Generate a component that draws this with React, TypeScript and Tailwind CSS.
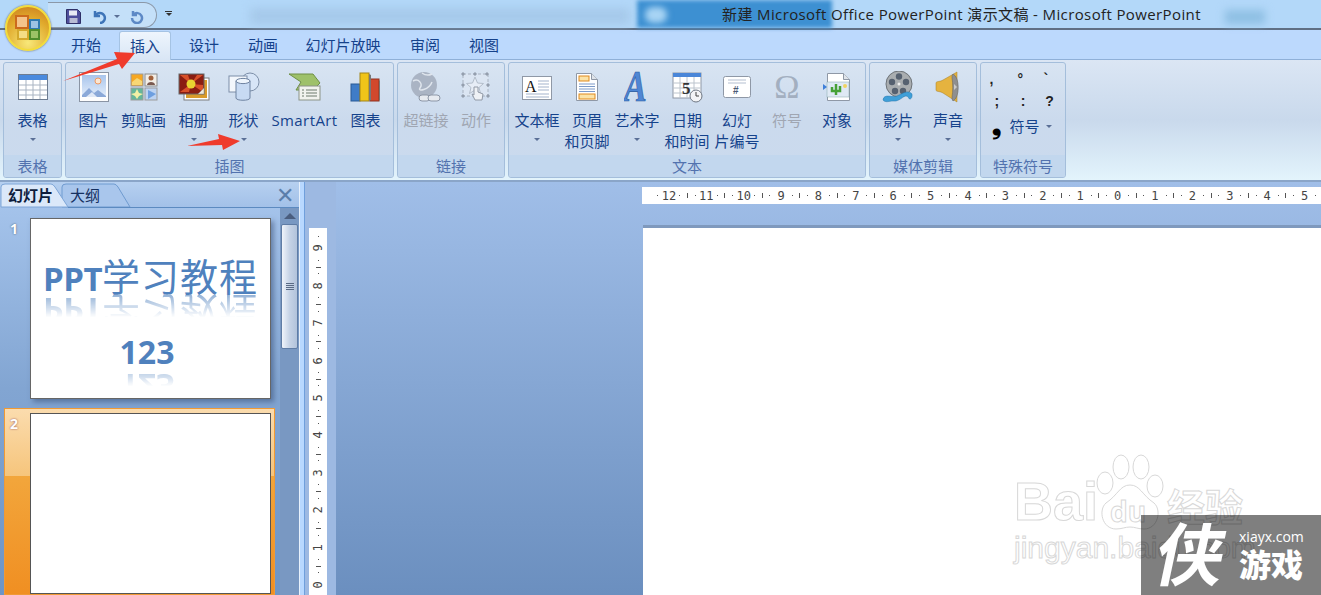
import type { ReactNode } from "react";

function Caret({ className = "" }: { className?: string }) {
	return <span className={`inline-block h-0 w-0 border-x-[3px] border-t-[3px] border-x-transparent border-t-[#5a6f96] ${className}`} />;
}

const TableIcon = (
	<svg width="32" height="28" viewBox="0 0 32 28">
		<rect x="1.500" y="1.500" width="29" height="25" fill="#fff" stroke="#6d7c91" />
		<rect x="2" y="2" width="28" height="5" fill="#4a8ade" />
		<path d="M2 12h28M2 17h28M2 22h28M9 7v19M16 7v19M23 7v19" stroke="#a9b4c2" fill="none" />
	</svg>
);
const PictureIcon = (
	<svg width="32" height="32" viewBox="0 0 32 32">
		<rect x="1.500" y="1.500" width="29" height="29" fill="#fdfdfd" stroke="#8a94a4" />
		<defs>
			<linearGradient id="sky" x1="0" y1="0" x2="0" y2="1">
				<stop offset="0" stopColor="#a9c5ec" />
				<stop offset="1" stopColor="#e4eefb" />
			</linearGradient>
		</defs>
		<rect x="4" y="4" width="24" height="22" fill="url(#sky)" />
		<circle cx="20" cy="10" r="3" fill="#fbe6d2" stroke="#ef9a62" />
		<path d="M4 24l7-7 5 5 4-3 8 6v1H4z" fill="#8ba9d8" />
		<path d="M8 26l6-5 5 5z" fill="#dfe8f6" />
	</svg>
);
const ClipArtIcon = (
	<svg width="28" height="28" viewBox="0 0 28 28">
		<rect x="1" y="1" width="12" height="12" fill="#f6a723" stroke="#9b9b9b" />
		<path d="M2 9l5-4 5 3v4H2z" fill="#f7d774" />
		<rect x="15" y="1" width="12" height="12" fill="#f3eee6" stroke="#8c8c8c" />
		<circle cx="21" cy="5" r="2.500" fill="#a2603a" />
		<path d="M17 12c0-4 8-4 8 0z" fill="#7a5a50" />
		<rect x="1" y="15" width="12" height="12" fill="#66b69a" stroke="#9b9b9b" />
		<path d="M7 16l2 4 4 1-4 2-2 3-2-3-4-2 4-1z" fill="#f3f0a5" />
		<rect x="15" y="15" width="12" height="12" fill="#bcd3f2" stroke="#9b9b9b" />
		<path d="M18 17l8 4-8 5z" fill="#6d9fe0" />
	</svg>
);
const AlbumIcon = (
	<svg width="32" height="28" viewBox="0 0 32 28">
		<rect x="6" y="5" width="25" height="22" fill="#fff" stroke="#7d7d7d" />
		<rect x="8" y="7" width="21" height="18" fill="#d99a2b" />
		<rect x="1" y="1" width="25" height="20" fill="#8a1d12" stroke="#666" />
		<path d="M13 11L2 2h8zM13 11L25 2h-6zM13 11L25 19V12zM13 11L2 19h9z" fill="#d8502a" />
		<circle cx="13" cy="11" r="4.500" fill="#e8d431" />
		<path d="M20 21l6-6v6z" fill="#efe9db" stroke="#888" strokeWidth=".5" />
	</svg>
);
const ShapesIcon = (
	<svg width="32" height="30" viewBox="0 0 32 30">
		<circle cx="22" cy="10" r="9" fill="#d7e5f7" stroke="#7c8ea8" />
		<rect x="1" y="4" width="18" height="16" fill="#f3f7fc" stroke="#7c8ea8" />
		<path d="M8 9v17c0 3 14 3 14 0V9z" fill="#c7daf3" stroke="#6f83a1" />
		<ellipse cx="15" cy="9" rx="7" ry="2.600" fill="#eef5fd" stroke="#6f83a1" />
	</svg>
);
const SmartArtIcon = (
	<svg width="33" height="28" viewBox="0 0 33 28">
		<path d="M1 1h24l7 9-7 7H8l5-8z" fill="#9ec16a" stroke="#6f9046" />
		<rect x="11" y="13" width="21" height="14" fill="#f1f3ee" stroke="#8b9488" />
		<path d="M14 17h2M18 17h11M14 20h2M18 20h11M14 23h2M18 23h11" stroke="#6c7a6c" />
	</svg>
);
const ChartIcon = (
	<svg width="31" height="30" viewBox="0 0 31 30">
		<rect x="1" y="12" width="9" height="17" fill="#3f7cc7" stroke="#2b5a95" />
		<rect x="10" y="1" width="9" height="28" fill="#f0c419" stroke="#a3851a" />
		<rect x="20" y="7" width="9" height="22" fill="#d2482c" stroke="#8f3320" />
		<path d="M19 2l2 1v25l-2 1zM29 8l1 1v19l-1 1z" fill="#777" />
	</svg>
);
const HyperlinkIcon = (
	<svg width="32" height="32" viewBox="0 0 32 32">
		<circle cx="14" cy="14" r="13" fill="#aab4c4" />
		<path d="M3 10c6-3 10 3 7 7s9 2 12-6M12 2c4 3 8 2 10 1" stroke="#dfe5ed" strokeWidth="1.500" fill="none" />
		<rect x="9" y="24" width="11" height="6" rx="3" fill="#e6eaf0" stroke="#8d97a7" />
		<rect x="18" y="24" width="12" height="6" rx="3" fill="#e6eaf0" stroke="#8d97a7" />
	</svg>
);
const ActionIcon = (
	<svg width="30" height="30" viewBox="0 0 30 30">
		<rect x="2" y="2" width="25" height="22" fill="#dbe5f2" stroke="#a8b2c0" strokeDasharray="3 2" />
		<path d="M3 1h-2v2h2zM15 1h-2v2h2zM27 1h-2v2h2zM3 12h-2v2h2zM28 12h-2v2h2zM3 23h-2v2h2zM28 23h-2v2h2z" fill="#a5afbd" stroke="#8f99a8" />
		<path d="M14 5l2.500 6 6 .5-4.500 4 1.500 6-5.500-3.500-5.500 3.500 1.500-6-4.500-4 6-.5z" fill="#e7edf6" stroke="#b3bdca" />
		<path d="M13 15v8l-2-1 3 6h7l1-6-5-2v-5z" fill="#eef1f5" stroke="#9199a6" />
	</svg>
);
const TextBoxIcon = (
	<svg width="32" height="27" viewBox="0 0 32 27">
		<rect x="1.500" y="2.500" width="29" height="23" fill="#fff" stroke="#8f98a6" />
		<text x="4" y="18" fontFamily="Liberation Serif" fontSize="16" fill="#111">A</text>
		<path d="M17 7h11M17 10h11M17 13h11M17 16h11M5 20h23M5 23h23" stroke="#a3b3cc" />
	</svg>
);
const HeaderIcon = (
	<svg width="24" height="30" viewBox="0 0 24 30">
		<path d="M1.500 1.500h15l6 6v21h-21z" fill="#fff" stroke="#8f98a6" />
		<path d="M16.500 1.500v6h6" fill="#dfe4ea" stroke="#8f98a6" />
		<rect x="4" y="4" width="10" height="5" fill="#fbe3a8" stroke="#e08a1e" />
		<path d="M4 12h16M4 14.500h16M4 17h16M4 19.500h16" stroke="#7c9ac9" />
		<rect x="4" y="22" width="16" height="5" fill="#fbe3a8" stroke="#e08a1e" />
	</svg>
);
const WordArtIcon = (
	<svg width="26" height="32" viewBox="0 0 26 32">
		<text x="0" y="23" transform="scale(1 1.300)" fontFamily="Liberation Serif" fontSize="34" fontStyle="italic" fontWeight="700" fill="#4f86d4" stroke="#27589f" strokeWidth=".5">A</text>
	</svg>
);
const DateIcon = (
	<svg width="31" height="31" viewBox="0 0 31 31">
		<rect x="1" y="1" width="28" height="25" fill="#fff" stroke="#8f98a6" />
		<rect x="1" y="1" width="28" height="4" fill="#4a86d8" />
		<path d="M1 11h28M1 16h28M1 21h28M8 5v21M15 5v21M22 5v21" stroke="#bcc4cd" />
		<text x="10" y="22" fontFamily="Liberation Serif" fontSize="17" fontWeight="700" fill="#333">5</text>
		<circle cx="24" cy="24" r="6" fill="#f3f4f6" stroke="#6f7783" />
		<path d="M24 20v4h3" stroke="#444" fill="none" />
	</svg>
);
const SlideNumberIcon = (
	<svg width="30" height="24" viewBox="0 0 30 24">
		<rect x="1.500" y="1.500" width="27" height="21" rx="2" fill="#fff" stroke="#8f98a6" />
		<path d="M6 5h18M6 8h18" stroke="#b4bfd0" />
		<text x="11" y="19" fontFamily="Liberation Sans" fontSize="10" fontWeight="700" fill="#4a5a75">#</text>
	</svg>
);
const OmegaIcon = <span className="text-[34px] leading-none font-['Liberation_Serif',serif] text-[#a3afc0]">Ω</span>;
const ObjectIcon = (
	<svg width="30" height="30" viewBox="0 0 30 30">
		<path d="M5.500 1.500h16l6 6v21h-22z" fill="#fff" stroke="#8f98a6" />
		<path d="M21.500 1.500v6h6" fill="#dfe4ea" stroke="#8f98a6" />
		<rect x="5" y="10" width="22" height="15" fill="#dfe9f4" stroke="#8aa" strokeWidth=".5" />
		<path d="M1 12l4 3-4 3z" fill="#3f7fd8" />
		<path d="M14 12v11M10 15v4h8v-5" stroke="#46a135" strokeWidth="2.500" fill="none" />
		<circle cx="23" cy="14" r="2" fill="#f1d360" />
	</svg>
);
const FilmIcon = (
	<svg width="32" height="32" viewBox="0 0 32 32">
		<circle cx="17" cy="13" r="13" fill="#a9adb0" stroke="#6e7378" />
		<circle cx="17" cy="5.500" r="3.200" fill="#566170" />
		<circle cx="10" cy="11" r="3.200" fill="#566170" />
		<circle cx="24" cy="11" r="3.200" fill="#566170" />
		<circle cx="13" cy="20" r="3.200" fill="#566170" />
		<circle cx="21" cy="20" r="3.200" fill="#566170" />
		<circle cx="17" cy="13" r="1.500" fill="#eee" />
		<path d="M1 29c1-7 9-2 14-4s9-6 14-3c2 1 1 6-1 6s-1-3-4-3-7 6-13 5c-3 0-8 2-10-1z" fill="#3f9fd8" stroke="#2776ad" strokeWidth=".5" />
	</svg>
);
const SpeakerIcon = (
	<svg width="26" height="32" viewBox="0 0 26 32">
		<path d="M1 12c0-2 4-1 7-3L22 1v30L8 22c-3-2-7-1-7-3z" fill="#e5b33f" stroke="#a67f25" strokeWidth=".5" />
		<path d="M18 3c7 3 7 24 0 27 -1-1-1-3-1-4 1-5 1-14 0-19 0-2 0-3 1-4z" fill="#8f8f8f" stroke="#5e5e5e" strokeWidth=".5" />
		<path d="M19 13l3 3-3 3z" fill="#c9c9c9" />
	</svg>
);

type Item = { label: ReactNode; icon: ReactNode; w?: string; caret?: boolean; line2?: string; off?: boolean };

function RibbonButton({ item }: { item: Item }) {
	return (
		<div className={`flex flex-col items-center ${item.w ?? "w-[50px]"}`}>
			<div className="flex h-[34px] items-center justify-center">{item.icon}</div>
			<div className={`mt-[6px] text-[15px] leading-[21px] whitespace-nowrap ${item.off ? "text-[#a0a6b2]" : "text-[#15428b]"}`}>{item.label}</div>
			{item.line2 && <div className="text-[15px] leading-[20px] whitespace-nowrap text-[#15428b]">{item.line2}</div>}
			{item.caret && <Caret className="mt-[7px]" />}
		</div>
	);
}

function Group({ title, width, children }: { title: string; width: string; children: ReactNode }) {
	return (
		<div className={`flex h-[116px] flex-col overflow-hidden rounded-[3px] border border-[#a4bedb] bg-gradient-to-b from-[#d8e4f2] via-[#cbdaed] to-[#cadaee] ${width}`}>
			<div className="flex h-[92px] justify-center pt-[7px]">{children}</div>
			<div className="flex flex-1 items-center justify-center bg-[#c2d7ee] text-[15px] leading-none text-[#5272ae]">{title}</div>
		</div>
	);
}

const illustrations: Item[] = [
	{ label: "图片", icon: PictureIcon },
	{ label: "剪贴画", icon: ClipArtIcon },
	{ label: "相册", icon: AlbumIcon, caret: true },
	{ label: "形状", icon: ShapesIcon, caret: true },
	{ label: <span className="tracking-[0.4px]">SmartArt</span>, icon: SmartArtIcon, w: "w-[72px]" },
	{ label: "图表", icon: ChartIcon },
];
const textItems: Item[] = [
	{ label: "文本框", icon: TextBoxIcon, caret: true },
	{ label: "页眉", line2: "和页脚", icon: HeaderIcon },
	{ label: "艺术字", icon: WordArtIcon, caret: true },
	{ label: "日期", line2: "和时间", icon: DateIcon },
	{ label: "幻灯", line2: "片编号", icon: SlideNumberIcon },
	{ label: "符号", icon: OmegaIcon, off: true },
	{ label: "对象", icon: ObjectIcon },
];

const hRulerNumbers = [12, 11, 10, 9, 8, 7, 6, 5, 4, 3, 2, 1, 0, 1, 2, 3, 4, 5];
const vRulerNumbers = [9, 8, 7, 6, 5, 4, 3, 2, 1, 0];

function HRuler() {
	return (
		<div className="-ml-px flex h-[17px] shrink-0 items-center overflow-hidden bg-white pl-[12px] font-['DejaVu_Sans_Mono',monospace] text-[12px] leading-none text-[#444]">
			{hRulerNumbers.map((n, i) => (
				<div key={i} className="flex w-[37.4px] shrink-0 items-center justify-around">
					<span className="h-[1px] w-[1px] bg-[#555]" />
					<span className="flex w-[8px] justify-center">{n}</span>
					<span className="h-[1px] w-[1px] bg-[#555]" />
					<span className="h-[5px] w-[1px] bg-[#555]" />
				</div>
			))}
		</div>
	);
}

function VRuler() {
	return (
		<div className="flex h-[367px] w-[18px] flex-col overflow-hidden bg-white pt-[5px] font-['DejaVu_Sans_Mono',monospace] text-[12px] leading-none text-[#444]">
			{vRulerNumbers.map((n) => (
				<div key={n} className="flex h-[37.4px] shrink-0 flex-col items-center justify-around">
					<span className="h-[1px] w-[1px] bg-[#555]" />
					<span className="-rotate-90">{n}</span>
					<span className="h-[1px] w-[1px] bg-[#555]" />
					<span className="h-[1px] w-[5px] bg-[#555]" />
				</div>
			))}
		</div>
	);
}

function Reflected({ className, children }: { className: string; children: ReactNode }) {
	return (
		<div className={`flex flex-col items-center ${className}`}>
			<div>{children}</div>
			<div aria-hidden className="-mt-[6px] h-[28px] -scale-y-100 overflow-hidden opacity-60 [mask-image:linear-gradient(to_top,black,transparent_80%)]">
				<div className="-translate-y-[12px]">{children}</div>
			</div>
		</div>
	);
}

export default function App() {
	return (
		<div className="relative h-[595px] w-[1321px] overflow-hidden bg-[#9cbae0] font-['Open_Sans','Noto_Sans_CJK_SC',sans-serif]">
			{/* title bar */}
			<div className="relative h-[30px] border-b-2 border-[#5f6f84] bg-[#b3d8f9]">
				<div className="absolute left-[637px] top-0 h-[28px] w-[195px] bg-[#3d90d2] blur-[2px]" />
				<div className="absolute left-[645px] top-[7px] h-[16px] w-[22px] rounded-full bg-[#a8d4f4] blur-[3px]" />
				<div className="absolute left-[250px] top-[8px] h-[16px] w-[380px] bg-[#a6c9ea] blur-[5px]" />
				<div className="absolute left-[1225px] top-[10px] h-[14px] w-[40px] bg-[#8ebfe3] blur-[4px]" />
				<div className="absolute left-[48px] top-[2px] h-[26px] w-[109px] rounded-r-[14px] border border-l-0 border-[#8b98a8] bg-[#c4e0f9]" />
				<div className="absolute left-[66px] top-[9px] flex items-center">
					<svg width="15" height="15" viewBox="0 0 15 15">
						<path d="M.5.5h11l3 3v11H.5z" fill="#4e4f9c" stroke="#2f3068" />
						<rect x="3" y="1.500" width="8" height="5" fill="#e8ebf4" />
						<rect x="3.500" y="9" width="8" height="5" fill="#b9bcd4" />
					</svg>
					<svg width="14" height="14" viewBox="0 0 14 14" className="ml-[12px]" fill="none" stroke="#3e74b8" strokeWidth="2.500">
						<path d="M2 1v5h5" />
						<path d="M2.500 5.500A5 5 0 1 1 7 13" />
					</svg>
					<Caret className="ml-[7px]" />
					<svg width="14" height="14" viewBox="0 0 14 14" className="ml-[10px]" fill="none" stroke="#5d89c6" strokeWidth="2.500">
						<path d="M3 1l0 4 4 0" />
						<path d="M3.500 4.500A5 5 0 1 1 2 8" />
					</svg>
				</div>
				<div className="absolute left-[165px] top-[11px] flex flex-col items-center gap-[1px]">
					<span className="h-[1px] w-[7px] bg-[#333]" />
					<Caret className="border-t-[#333]" />
				</div>
				<div className="absolute left-[722px] top-0 flex h-[28px] items-center whitespace-nowrap text-[15px] tracking-[0.38px] text-[#222]">新建 Microsoft Office PowerPoint 演示文稿 - Microsoft PowerPoint</div>
			</div>

			{/* office button */}
			<div className="absolute left-[5px] top-[5px] z-20 flex h-[46px] w-[46px] items-center justify-center rounded-full border-2 border-[#f3dc3c] bg-[radial-gradient(circle_at_50%_85%,#f8e878,#e0a92b_60%,#c9791e)] shadow-[0_0_2px_#555]">
				<svg width="30" height="30" viewBox="0 0 30 30" fill="none" strokeWidth="2">
					<rect x="3" y="3" width="12" height="12" fill="#f4c38a" stroke="#cc6a1c" />
					<rect x="17" y="7" width="9" height="9" fill="#9cc3e3" stroke="#2f7ab0" />
					<rect x="5" y="17" width="10" height="9" fill="#f3dd85" stroke="#d4a92c" />
					<rect x="17" y="17" width="9" height="9" fill="#9cc267" stroke="#4f8d2c" />
				</svg>
			</div>

			{/* tabs */}
			<div className="flex h-[30px] items-end border-b border-[#8fb0d8] bg-[#bcd9fd] pl-[60px] text-[15px] text-[#15428b]">
				<div className="flex h-[27px] w-[52px] items-center justify-center">开始</div>
				<div className="relative z-10 ml-[7px] -mb-px flex h-[29px] w-[52px] items-center justify-center rounded-t-[3px] border border-b-0 border-[#a5c3e4] bg-gradient-to-b from-[#eef5fd] to-[#d9e6f5]">插入</div>
				<div className="ml-[7px] flex h-[27px] w-[52px] items-center justify-center">设计</div>
				<div className="ml-[7px] flex h-[27px] w-[52px] items-center justify-center">动画</div>
				<div className="ml-[7px] flex h-[27px] w-[94px] items-center justify-center">幻灯片放映</div>
				<div className="ml-[9px] flex h-[27px] w-[52px] items-center justify-center">审阅</div>
				<div className="ml-[7px] flex h-[27px] w-[52px] items-center justify-center">视图</div>
			</div>

			{/* ribbon */}
			<div className="flex h-[122px] gap-[3px] border-b-2 border-[#8aa5c8] bg-gradient-to-b from-[#dbe6f4] via-[#c9d9ec] to-[#e3f4fc] pl-[3px] pt-[2px]">
				<Group title="表格" width="w-[59px]">
					<RibbonButton item={{ label: "表格", icon: TableIcon, caret: true }} />
				</Group>
				<Group title="插图" width="w-[329px]">
					{illustrations.map((item, i) => (
						<RibbonButton key={i} item={item} />
					))}
				</Group>
				<Group title="链接" width="w-[108px]">
					<RibbonButton item={{ label: "超链接", icon: HyperlinkIcon, off: true }} />
					<RibbonButton item={{ label: "动作", icon: ActionIcon, off: true }} />
				</Group>
				<Group title="文本" width="w-[358px]">
					{textItems.map((item, i) => (
						<RibbonButton key={i} item={item} />
					))}
				</Group>
				<Group title="媒体剪辑" width="w-[108px]">
					<RibbonButton item={{ label: "影片", icon: FilmIcon, caret: true }} />
					<RibbonButton item={{ label: "声音", icon: SpeakerIcon, caret: true }} />
				</Group>
				<Group title="特殊符号" width="w-[86px]">
					<div className="-mt-[2px] flex flex-col pl-[11px] font-['Liberation_Sans',sans-serif] text-[14px] font-bold text-[#222]">
						<div className="grid h-[22px] w-[78px] grid-cols-3 items-center leading-none">
							<span>,</span>
							<span className="pl-[2px]">°</span>
							<span className="pl-[2px]">`</span>
						</div>
						<div className="grid h-[22px] w-[78px] grid-cols-3 items-center pl-[5px] leading-none">
							<span>;</span>
							<span className="pl-[2px]">:</span>
							<span className="pl-[2px]">?</span>
						</div>
						<div className="mt-[2px] flex h-[24px] items-center leading-none">
							<span className="w-[20px] pl-[2px] font-['DejaVu_Sans',sans-serif] text-[24px] text-black">❟</span>
							<span className="font-['Open_Sans','Noto_Sans_CJK_SC',sans-serif] text-[15px] font-normal text-[#15428b]">符号</span>
							<Caret className="ml-[6px]" />
						</div>
					</div>
				</Group>
			</div>

			{/* workspace */}
			<div className="flex h-[413px] overflow-hidden">
				<div className="flex w-[300px] shrink-0 flex-col border-r border-[#e8f1fc] bg-gradient-to-b from-[#a9c7ee] via-[#82a5d2] to-[#6e95c6]">
					<div className="relative flex h-[26px] shrink-0 items-center bg-gradient-to-b from-[#b6d0f0] to-[#a2c0e8] pr-[5px] text-[15px]">
						<svg className="absolute left-0 top-0" width="299" height="26" viewBox="0 0 299 26">
							<path d="M62 25 L62 5 Q62 2 66 2 H114 Q116 2 118 5 L130 25 Z" fill="#a9c6ec" stroke="#6f9bd0" />
							<path d="M1 25 V5 Q1 2 5 2 H51 Q53 2 55 5 L68 25 Z" fill="#dbe8f9" stroke="#7ea6d8" />
							<path d="M68 25.500H299" stroke="#5c8ac0" />
						</svg>
						<span className="relative ml-[8px] w-[54px] font-bold text-[#0e1c3c]">幻灯片</span>
						<span className="relative ml-[8px] text-[#15305f]">大纲</span>
						<span className="relative ml-auto pb-[2px] text-[22px] leading-none text-[#5a7eaa]">✕</span>
					</div>
					<div className="flex min-h-0 flex-1">
						<div className="flex min-w-0 flex-1 flex-col pl-[4px] pt-[10px]">
							<div className="flex pl-[6px]">
								<span className="w-[20px] text-[14px] font-bold leading-[22px] text-white [text-shadow:0_0_2px_#456]">1</span>
								<div className="flex h-[181px] w-[241px] flex-col items-center border border-[#666] bg-white pt-[35px] text-[#4f81bd] shadow-[3px_3px_5px_rgba(50,70,110,.5)]">
									<Reflected className="">
										<div className="flex items-baseline whitespace-nowrap leading-[44px]">
											<span className="text-[33px] font-bold tracking-[-0.5px]">PPT</span>
											<span className="text-[38px] tracking-[1px]">学习教程</span>
										</div>
									</Reflected>
									<Reflected className="mt-[11px] mr-[7px]">
										<div className="text-[32px] font-bold leading-[36px]">123</div>
									</Reflected>
								</div>
							</div>
							<div className="mt-[9px] flex h-[190px] w-[271px] border border-[#f09a35] bg-[linear-gradient(to_bottom,#fbdcae,#f6c57c_36%,#f2a63c_36%,#f08f22)] pl-[5px] pt-[4px]">
								<span className="w-[20px] text-[14px] font-bold leading-[22px] text-white [text-shadow:0_0_2px_#845]">2</span>
								<div className="h-[181px] w-[241px] border border-[#555] bg-white" />
							</div>
						</div>
						<div className="flex w-[19px] shrink-0 flex-col items-center bg-[#7998c2] pt-[5px]">
							<span className="h-0 w-0 border-x-[6px] border-b-[6px] border-x-transparent border-b-[#4a5d7e]" />
							<div className="mt-[5px] flex h-[125px] w-[17px] items-center justify-center rounded-[2px] border border-[#5f7ca5] bg-gradient-to-r from-[#f0f4fa] via-[#c6d3e6] to-[#b2c3db]">
								<div className="flex flex-col gap-[1px]">
									<span className="h-[1px] w-[8px] bg-[#5a6b85]" />
									<span className="h-[1px] w-[8px] bg-[#5a6b85]" />
									<span className="h-[1px] w-[8px] bg-[#5a6b85]" />
									<span className="h-[1px] w-[8px] bg-[#5a6b85]" />
								</div>
							</div>
						</div>
					</div>
				</div>

				{/* splitter */}
				<div className="w-[5px] shrink-0 border-r border-[#6f9fdc] bg-[#b8d8ff]" />

				<div className="flex min-w-0 flex-1 bg-gradient-to-b from-[#a0bee8] to-[#6b8fbf]">
					<div className="w-[31px] shrink-0 bg-[#9db9e2] pl-[4px] pt-[46px]">
						<VRuler />
					</div>
					<div className="ml-[307px] flex min-w-0 flex-1 flex-col pt-[5px]">
						<HRuler />
						<div className="mt-[21px] h-[3px] shrink-0 bg-[#7f99bd]" />
						<div className="flex-1 bg-white" />
					</div>
				</div>
			</div>

			{/* red arrows drawn on top of the screenshot */}
			<svg className="absolute left-0 top-0 z-30" width="260" height="160" viewBox="0 0 260 160">
				<polygon points="63,81 117,59 114,52 135,53 122,69 119,64" fill="#ef3b2c" />
				<polygon points="187,146 219,139 218,134 240,141 223,150 222,145" fill="#ef3b2c" />
			</svg>

			{/* baidu watermark */}
			<div className="absolute left-[1014px] top-[453px] h-[120px] w-[240px] text-white [-webkit-text-stroke:1px_#d8d8d8]">
				<svg className="absolute left-[80px] top-0" width="72" height="80" viewBox="0 0 72 80" fill="#fff" stroke="#d8d8d8">
					<ellipse cx="11" cy="30" rx="8" ry="11" />
					<ellipse cx="27" cy="14" rx="8" ry="12" />
					<ellipse cx="47" cy="14" rx="8" ry="12" />
					<ellipse cx="61" cy="33" rx="8" ry="11" />
					<path d="M36 32c-10 0-12 10-24 18-8 7-4 26 10 26 6 0 9-2 14-2s8 2 14 2c14 0 18-19 10-26-12-8-14-18-24-18z" />
				</svg>
				<span className="absolute left-0 top-[18px] font-['Liberation_Sans',sans-serif] text-[54px] font-bold leading-[60px]">Bai</span>
				<span className="absolute left-[96px] top-[43px] text-[28px] font-bold leading-[30px]">du</span>
				<span className="absolute left-[153px] top-[30px] text-[38px] font-bold leading-[46px]">经验</span>
				<span className="absolute left-0 top-[76px] font-['Liberation_Sans',sans-serif] text-[30px] leading-[38px] whitespace-nowrap">jingyan.baidu.com</span>
			</div>

			{/* site badge */}
			<div className="absolute bottom-0 right-0 flex h-[80px] w-[180px] bg-black/50 text-white">
				<span className="ml-[16px] -skew-x-12 text-[68px] font-bold leading-[78px]">侠</span>
				<div className="ml-[14px] flex flex-col pt-[12px]">
					<span className="text-[14px] leading-[20px]">xiayx.com</span>
					<span className="mt-[1px] text-[32px] font-black leading-[34px]">游戏</span>
				</div>
			</div>
		</div>
	);
}
